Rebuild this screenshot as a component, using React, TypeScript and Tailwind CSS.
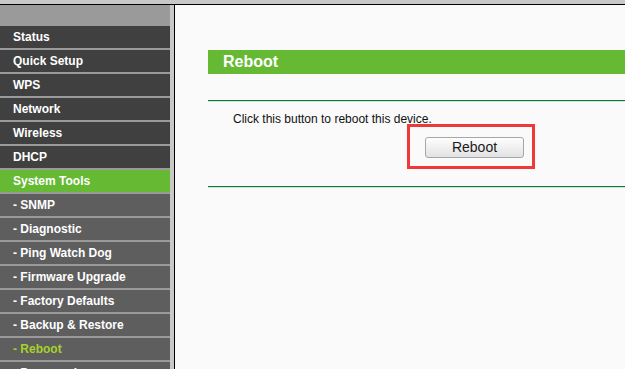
import React from 'react'

const MENU = [
  { label: 'Status', level: 0 },
  { label: 'Quick Setup', level: 0 },
  { label: 'WPS', level: 0 },
  { label: 'Network', level: 0 },
  { label: 'Wireless', level: 0 },
  { label: 'DHCP', level: 0 },
  { label: 'System Tools', level: 0, active: true },
  { label: '- SNMP', level: 1 },
  { label: '- Diagnostic', level: 1 },
  { label: '- Ping Watch Dog', level: 1 },
  { label: '- Firmware Upgrade', level: 1 },
  { label: '- Factory Defaults', level: 1 },
  { label: '- Backup & Restore', level: 1 },
  { label: '- Reboot', level: 1, current: true },
  { label: '- Password', level: 1 },
]

export default function App() {
  return (
    <div className="w-[625px] h-[369px] overflow-hidden flex flex-col bg-[#fafafa] font-['Liberation_Sans',Arial,sans-serif]">
      {/* top frame */}
      <div className="h-[4px] bg-[#c8c8c8] shrink-0" />
      <div className="h-px bg-black shrink-0" />

      <div className="flex flex-1 min-h-0">
        {/* Sidebar */}
        <div className="w-[170px] shrink-0 bg-[#9a9a9a] pt-[21px] flex flex-col gap-[2px]">
          {MENU.map(item => (
            <div
              key={item.label}
              className={`h-[22px] shrink-0 flex items-center pl-[13px] text-[12px] font-bold whitespace-nowrap
                ${item.active ? 'bg-[#66b933]' : item.level === 0 ? 'bg-[#404040]' : 'bg-[#5e5e5e]'}
                ${item.current ? 'text-[#a6d22c]' : 'text-white'}`}
            >
              {item.label}
            </div>
          ))}
        </div>
        <div className="w-[4px] shrink-0 bg-[#c8c8c8]" />
        <div className="w-px shrink-0 bg-black" />

        {/* Content */}
        <div className="flex-1 pl-[33px] pt-[45px]">
          <div className="h-[24px] bg-[#66b933] flex items-center pl-[15px] text-[16px] font-bold text-white">
            Reboot
          </div>

          <div className="mt-[26px] h-px bg-[#0b7a3a]" />
          <div className="h-px bg-[#cfe3d5]" />

          <div className="mt-[11px] pl-[25px] text-[12px] leading-[12px] text-[#111]">
            Click this button to reboot this device.
          </div>

          <div className="-mt-px ml-[199px] w-[128px] border-[3px] border-[#ef3838] pl-[15px] pt-[8px] pb-[7px]">
            <button className="w-[99px] h-[21px] rounded-[3px] border border-[#a6a6a6] bg-gradient-to-b from-[#fefefe] to-[#e2e2e2] text-[14px] leading-[19px] text-[#1a1a1a]">
              Reboot
            </button>
          </div>

          <div className="mt-[17px] h-px bg-[#0b7a3a]" />
          <div className="h-px bg-[#cfe3d5]" />
        </div>
      </div>
    </div>
  )
}
